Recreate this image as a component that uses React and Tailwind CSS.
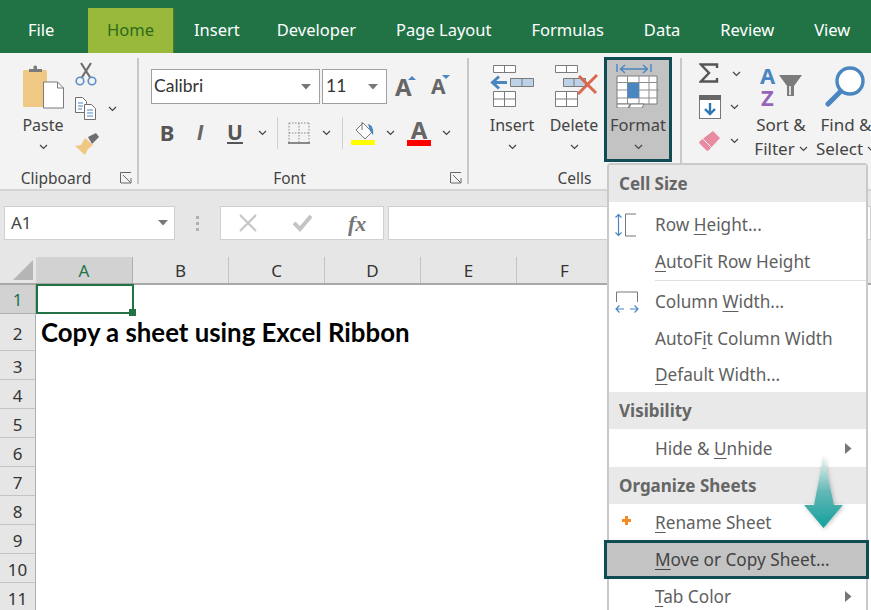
import React from "react";

const ui = "font-['Noto_Sans',sans-serif]";
const calibri = "font-['Lato',sans-serif]";

const tabs = ["Insert", "Developer", "Page Layout", "Formulas", "Data", "Review", "View"];
const columns = ["B", "C", "D", "E", "F", "G"];
const rowNumbers = [3, 4, 5, 6, 7, 8, 9, 10, 11];

const Chevron = ({ className = "" }) => (
  <svg width="9" height="6" viewBox="0 0 9 6" className={`shrink-0 ${className}`}>
    <path d="M1 1l3.5 3.5L8 1" fill="none" stroke="#444" strokeWidth="1.2" />
  </svg>
);

const Caret = () => (
  <svg width="10" height="6" viewBox="0 0 10 6">
    <path d="M0 0h10L5 5.5z" fill="#777" />
  </svg>
);

const Launcher = () => (
  <svg width="12" height="12" viewBox="0 0 12 12">
    <path d="M.5 11V.5H11M3 3l7.5 7.5M6 11h5V6M1 11h5" fill="none" stroke="#666" strokeWidth="1" />
  </svg>
);

const PasteIcon = () => (
  <svg width="42" height="46" viewBox="0 0 42 46">
    <rect x="1" y="7" width="24" height="37" rx="1.5" fill="#efc884" />
    <path d="M7 9V6h4.5V3.5a2 2 0 0 1 3.500 0V6H20v3z" fill="#7b7b7b" />
    <path d="M21.500 19h14l6 6v20h-20z" fill="#fff" stroke="#7b7b7b" strokeWidth="1" />
    <path d="M35.500 19v6h6" fill="none" stroke="#7b7b7b" />
  </svg>
);

const ScissorsIcon = () => (
  <svg width="22" height="24" viewBox="0 0 22 24">
    <path d="M6 1l9.500 15M16 1L6.500 16" fill="none" stroke="#6e6e6e" strokeWidth="2.200" />
    <circle cx="5" cy="19" r="3.800" fill="none" stroke="#5b8fc5" strokeWidth="1.600" />
    <circle cx="17" cy="19" r="3.800" fill="none" stroke="#5b8fc5" strokeWidth="1.600" />
  </svg>
);

const CopyIcon = () => (
  <svg width="21" height="23" viewBox="0 0 21 23">
    <path d="M.5.5h7l4 4v11H.5z" fill="#fff" stroke="#6e6e6e" />
    <path d="M9.500 7.500h7l4 4v11h-11z" fill="#fff" stroke="#6e6e6e" />
    <path d="M3 6h5M3 9h5M3 12h4M12 13h6M12 16h6M12 19h6" stroke="#4a86c0" />
  </svg>
);

const BrushIcon = () => (
  <svg width="24" height="22" viewBox="0 0 24 22">
    <path d="M13 4l8-4 3 4-7 7z" fill="#6e6e6e" />
    <path d="M10 5l8 7-5 4-3 6L0 13l6-1z" fill="#efc884" />
  </svg>
);

const BordersIcon = () => (
  <svg width="22" height="22" viewBox="0 0 22 22">
    <path d="M1 1h20M1 11h20M1 1v19M11 1v19M21 1v19" fill="none" stroke="#888" strokeDasharray="1.500 1.500" />
    <path d="M0 21h22" stroke="#666" strokeWidth="1.500" />
  </svg>
);

const FillIcon = () => (
  <svg width="24" height="24" viewBox="0 0 24 24">
    <path d="M12 2l9 9-7 7-9-9z" fill="#fff" stroke="#777" />
    <path d="M11 1v8" stroke="#777" />
    <path d="M17 3c4 1 6 5 5 11l-3-4z" fill="#4a86c0" />
    <rect y="19" width="24" height="5" fill="#ffff00" />
  </svg>
);

const InsertIcon = () => (
  <svg width="44" height="44" viewBox="0 0 44 44">
    <g fill="#fff" stroke="#7b7b7b" strokeWidth="1">
      <path d="M3.500 1.500h22v7h-22zM14.500 1.500v7" />
      <path d="M3.500 27.500h22v15h-22zM3.500 35h22M14.500 27.500v15" />
    </g>
    <path d="M20.500 14.500h23v8h-23z" fill="#bcd2e8" stroke="#7b7b7b" />
    <path d="M32 14.500v8" stroke="#7b7b7b" />
    <path d="M17 18.500H4M9 12.500l-6.500 6 6.500 6" fill="none" stroke="#4a86c0" strokeWidth="3" />
  </svg>
);

const DeleteIcon = () => (
  <svg width="44" height="44" viewBox="0 0 44 44" className="ml-[5px]">
    <g fill="#fff" stroke="#7b7b7b" strokeWidth="1">
      <path d="M.5 1.500h22v7H.5zM11.500 1.500v7" />
      <path d="M.5 27.500h22v15H.5zM.5 35h22M11.500 27.500v15" />
    </g>
    <path d="M8.500 14.500h22v8h-22z" fill="#bcd2e8" stroke="#7b7b7b" />
    <path d="M19 14.500v8" stroke="#7b7b7b" />
    <path d="M24 12l17 17M42 11L23 30" fill="none" stroke="#d9694a" strokeWidth="3" />
  </svg>
);

const FormatIcon = () => (
  <svg width="44" height="44" viewBox="0 0 44 44">
    <path d="M1 0v8M35 0v8M5 5h26M9 1L4.500 5 9 9M27 1l4.500 4L27 9" fill="none" stroke="#4a86c0" strokeWidth="1.400" />
    <path d="M1 12h40v28H1z" fill="#fff" stroke="#7b7b7b" />
    <path d="M1 18.500h40M1 34h40M11.500 12v28M23 12v28M33 12v28M1 26h10M23 26h20" stroke="#8d8d8d" />
    <rect x="11.500" y="19" width="11.500" height="15" fill="#4a86c0" />
    <path d="M1 40h13l-2 4H1zM15 40h13l-2 4H13z" fill="#fff" stroke="#7b7b7b" />
  </svg>
);

const SigmaIcon = () => (
  <svg width="20" height="20" viewBox="0 0 20 20">
    <path d="M18 5V1.500H2L10 10 2 18.500h16V15" fill="none" stroke="#555" strokeWidth="2.400" />
  </svg>
);

const FillDownIcon = () => (
  <svg width="22" height="24" viewBox="0 0 22 24">
    <rect x=".5" y=".5" width="21" height="23" fill="#fff" stroke="#777" />
    <rect width="22" height="5" fill="#666" />
    <path d="M11 8v11M6 14l5 5 5-5" fill="none" stroke="#2f75b5" strokeWidth="2.400" />
  </svg>
);

const EraserIcon = () => (
  <svg width="22" height="22" viewBox="0 0 22 22">
    <path d="M14 1l7 7-11 12a2 2 0 0 1-3 0l-6-6a2 2 0 0 1 0-3z" fill="#e98ba0" />
    <path d="M4 9l9 9" stroke="#f3f3f3" strokeWidth="1" />
  </svg>
);

const SortIcon = () => (
  <svg width="46" height="42" viewBox="0 0 46 42" className="ml-[3px]">
    <text x="0" y="19" fontSize="22" fontWeight="700" fill="#4a86c0" fontFamily="Noto Sans">A</text>
    <text x="1" y="41" fontSize="22" fontWeight="700" fill="#9566b8" fontFamily="Noto Sans">Z</text>
    <path d="M19 10h23l-8 11v10h-7V21z" fill="#7b7b7b" />
    <path d="M29 21h2v9h-2z" fill="#ddd" />
  </svg>
);

const SearchIcon = () => (
  <svg width="42" height="42" viewBox="0 0 42 42">
    <circle cx="25" cy="16" r="13" fill="#fff" stroke="#4a86c0" strokeWidth="3.400" />
    <path d="M15 27L3 39" stroke="#4a86c0" strokeWidth="5" strokeLinecap="round" />
  </svg>
);

const RowHeightIcon = () => (
  <svg width="24" height="24" viewBox="0 0 24 24">
    <path d="M3.500 1v22M.5 4.500L3.500 1.500l3 3M.5 19.500l3 3 3-3" fill="none" stroke="#4a86c0" strokeWidth="1.200" />
    <path d="M21 1H10.500v22H21" fill="none" stroke="#777" />
  </svg>
);

const ColumnWidthIcon = () => (
  <svg width="24" height="22" viewBox="0 0 24 22">
    <path d="M1.500 11V1h21v10" fill="none" stroke="#777" />
    <path d="M1 18h8M15 18h8M4.500 14.500L1 18l3.500 3.500M19.500 14.500L23 18l-3.500 3.500" fill="none" stroke="#4a86c0" strokeWidth="1.200" />
  </svg>
);

const OrangeDot = () => (
  <svg width="9" height="9" viewBox="0 0 9 9" className="ml-[7px] -mt-[4px]">
    <path d="M3 0h3v3h3v3H6v3H3V6H0V3h3z" fill="#f58a1f" />
  </svg>
);

const LargeButton = ({ icon, label, className = "", labelClass = "" }) => (
  <div className={`flex flex-col items-center pt-[5px] ${className}`}>
    <div className="h-[46px] flex items-center justify-center">{icon}</div>
    <div className={`mt-[4px] h-[24px] leading-[24px] text-[16px] text-[#444] ${labelClass}`}>{label}</div>
    <Chevron className="mt-[7px]" />
  </div>
);

const TwoLineButton = ({ icon, first, second, className = "" }) => (
  <div className={`flex flex-col items-center pt-[5px] ${className}`}>
    <div className="h-[46px] flex items-center justify-center">{icon}</div>
    <div className="mt-[4px] h-[24px] leading-[24px] text-[17px] text-[#444] whitespace-nowrap">{first}</div>
    <div className="h-[24px] leading-[24px] text-[17px] text-[#444] whitespace-nowrap flex items-center gap-[4px]">
      {second}
      <Chevron />
    </div>
  </div>
);

const Group = ({ label, launcher, className = "", labelClass = "", children }) => (
  <div className={`mt-[5px] h-[126px] flex flex-col shrink-0 border-r-2 border-[#c8c8c8] ${className}`}>
    <div className="flex-1 min-h-0">{children}</div>
    <div className="h-[14px] flex items-center -mb-[1px]">
      <div className={`flex-1 text-center text-[15.500px] leading-[14px] text-[#444] ${labelClass}`}>{label}</div>
      {launcher && <div className="mr-[5px]"><Launcher /></div>}
    </div>
  </div>
);

const Underlined = ({ children }) => (
  <span className="underline underline-offset-[3px] decoration-1">{children}</span>
);

const MenuHeading = ({ children, className = "" }) => (
  <div className={`h-[37px] flex items-center pl-[10px] bg-[#e9e9e9] text-[17px] font-bold text-[#666] ${className}`}>
    {children}
  </div>
);

const MenuItem = ({ icon, arrow, children, className = "" }) => (
  <div className={`h-[37px] flex items-center text-[17.200px] text-[#5f5f5f] ${className}`}>
    <div className="w-[46px] pl-[6px] flex items-center shrink-0">{icon}</div>
    <div className="flex-1 whitespace-nowrap">{children}</div>
    {arrow && (
      <svg width="7" height="11" viewBox="0 0 7 11" className="mr-[14px]">
        <path d="M0 0l6.500 5.500L0 11z" fill="#777" />
      </svg>
    )}
  </div>
);

const FormatMenu = () => (
  <div className={`absolute left-[607px] top-[163px] w-[261px] h-[460px] bg-white border-2 border-[#c9c9c9] rounded-t-[4px] ${ui}`}>
    <MenuHeading>Cell Size</MenuHeading>
    <MenuItem icon={<RowHeightIcon />} className="mt-[4px]">Row <Underlined>H</Underlined>eight...</MenuItem>
    <MenuItem><Underlined>A</Underlined>utoFit Row Height</MenuItem>
    <div className="h-[1px] ml-[46px] bg-[#e0e0e0]" />
    <MenuItem icon={<ColumnWidthIcon />} className="mt-[2px]">Column <Underlined>W</Underlined>idth...</MenuItem>
    <MenuItem>AutoF<Underlined>i</Underlined>t Column Width</MenuItem>
    <MenuItem className="!h-[35px]"><Underlined>D</Underlined>efault Width...</MenuItem>
    <MenuHeading>Visibility</MenuHeading>
    <MenuItem arrow className="mt-[1px]">Hide &amp; <Underlined>U</Underlined>nhide</MenuItem>
    <MenuHeading>Organize Sheets</MenuHeading>
    <MenuItem icon={<OrangeDot />}><Underlined>R</Underlined>ename Sheet</MenuItem>
    <div className="-ml-[5px] -mr-[3px] -mt-[1px] h-[39px] flex items-center bg-[#c3c3c3] border-[3px] border-[#0f4c54] text-[17.200px] text-[#444]">
      <div className="w-[48px] shrink-0" />
      <div className="whitespace-nowrap"><Underlined>M</Underlined>ove or Copy Sheet...</div>
    </div>
    <MenuItem arrow className="-mt-[1px]"><Underlined>T</Underlined>ab Color</MenuItem>
  </div>
);

const DownArrow = () => (
  <svg width="50" height="82" viewBox="0 0 50 82" className="absolute left-[799px] top-[452px]">
    <defs>
      <linearGradient id="arrowFill" x1="0" y1="0" x2="0" y2="1">
        <stop offset="0" stopColor="#eef6f6" />
        <stop offset="0.5" stopColor="#62b7b5" />
        <stop offset="1" stopColor="#12a09c" />
      </linearGradient>
      <filter id="arrowShadow" x="-30%" y="-10%" width="160%" height="130%">
        <feDropShadow dx="1" dy="1" stdDeviation="2" floodColor="#000" floodOpacity="0.25" />
      </filter>
    </defs>
    <path d="M24.500 4L35 53h9L24.500 76 5 53h10z" fill="url(#arrowFill)" filter="url(#arrowShadow)" />
  </svg>
);

export default function App() {
  return (
    <div className={`relative w-[871px] h-[610px] overflow-hidden bg-white ${ui}`}>
      {/* tabs */}
      <div className="h-[53px] flex items-end bg-[#217346] text-white text-[16.500px]">
        <div className="h-[45px] w-[88px] shrink-0 pl-[28px] leading-[44px]">File</div>
        <div className="h-[45px] w-[86px] shrink-0 text-center leading-[44px] bg-[#98b93a] text-[#2f6b1e] border-r border-[#4f7a28]">Home</div>
        {tabs.map((tab, i) => (
          <div key={tab} className={`h-[45px] shrink-0 pl-[20px] leading-[44px] whitespace-nowrap ${i === 0 ? "pr-[17px]" : "pr-[20px]"}`}>{tab}</div>
        ))}
      </div>

      {/* ribbon */}
      <div className="h-[138px] flex bg-[#f3f3f3] border-b-2 border-[#d4d4d4]">
        <Group label="Clipboard" launcher className="w-[139px]" labelClass="pr-[8px]">
          <div className="flex pl-[22px]">
            <LargeButton icon={<PasteIcon />} label="Paste" className="w-[42px]" />
            <div className="ml-[11px] -mt-[2px] flex flex-col">
              <div className="h-[35px] flex items-center"><ScissorsIcon /></div>
              <div className="h-[35px] flex items-center gap-[12px]"><CopyIcon /><Chevron /></div>
              <div className="h-[35px] flex items-center"><BrushIcon /></div>
            </div>
          </div>
        </Group>

        <Group label="Font" launcher className="w-[330px] pl-[12px]" labelClass="pr-[22px]">
          <div className="mt-[11px] h-[35px] flex gap-[2px]">
            <div className={`w-[169px] h-[35px] pl-[2px] pr-[8px] flex items-center justify-between bg-white border border-[#a0a0a0] text-[17.500px] text-[#333] ${calibri}`}>
              Calibri <Caret />
            </div>
            <div className={`w-[65px] h-[35px] pl-[3px] pr-[8px] flex items-center justify-between bg-white border border-[#a0a0a0] text-[17.500px] text-[#333] ${calibri}`}>
              11 <Caret />
            </div>
            <div className="ml-[6px] w-[34px] h-[35px] flex items-center relative text-[24px] font-bold text-[#666]">
              A
              <span className="absolute left-[13px] top-[7px] border-x-[4px] border-b-[4px] border-x-transparent border-b-[#4a86c0]" />
            </div>
            <div className="w-[30px] h-[35px] flex items-center relative text-[21px] font-bold text-[#666]">
              A
              <span className="absolute left-[11px] top-[6px] border-x-[4px] border-t-[4px] border-x-transparent border-t-[#4a86c0]" />
            </div>
          </div>
          <div className="mt-[11px] h-[35px] flex items-center text-[#555]">
            <div className="w-[32px] text-center text-[22px] font-bold">B</div>
            <div className="w-[34px] text-center text-[22px] italic font-bold text-[#666] font-['Liberation_Sans',sans-serif]">I</div>
            <div className="w-[36px] text-center text-[21px] font-bold underline underline-offset-2">U</div>
            <div className="w-[18px] flex justify-center"><Chevron /></div>
            <div className="ml-[6px] w-[1px] h-[32px] bg-[#d0d0d0]" />
            <div className="ml-[10px] flex"><BordersIcon /></div>
            <div className="w-[32px] flex justify-center"><Chevron /></div>
            <div className="w-[1px] h-[32px] bg-[#d0d0d0]" />
            <div className="ml-[8px] flex"><FillIcon /></div>
            <div className="w-[30px] flex justify-center"><Chevron /></div>
            <div className="w-[28px] flex flex-col items-center">
              <div className="h-[21px] text-[24px] leading-[21px] font-bold text-[#666]">A</div>
              <div className="w-[24px] h-[6px] bg-[#ff0000]" />
            </div>
            <div className="w-[26px] flex justify-center"><Chevron /></div>
          </div>
        </Group>

        <Group label="Cells" className="w-[213px] pl-[12px]" labelClass="pr-[12px]">
          <div className="flex">
            <LargeButton icon={<InsertIcon />} label="Insert" className="w-[62px]" />
            <LargeButton icon={<DeleteIcon />} label="Delete" className="w-[62px]" />
            <LargeButton
              icon={<FormatIcon />}
              label="Format"
              labelClass="!text-[16.500px]"
              className="-ml-[1px] -mt-[1px] w-[68px] h-[105px] !pt-[3px] bg-[#c3c3c3] border-[3px] border-[#0f4c54]"
            />
          </div>
        </Group>

        <div className="mt-[5px] flex-1 flex min-w-0">
          <div className="w-[70px] pl-[17px] -mt-[2px] shrink-0 flex flex-col">
            <div className="h-[34px] flex items-center gap-[13px]"><SigmaIcon /><Chevron className="mt-[2px]" /></div>
            <div className="h-[34px] flex items-center gap-[9px]"><FillDownIcon /><Chevron /></div>
            <div className="h-[34px] flex items-center gap-[9px]"><EraserIcon /><Chevron /></div>
          </div>
          <TwoLineButton icon={<SortIcon />} first="Sort &" second="Filter" className="w-[58px] shrink-0" />
          <TwoLineButton icon={<SearchIcon />} first="Find &" second="Select" className="w-[72px] shrink-0" />
        </div>
      </div>

      {/* formula bar */}
      <div className="h-[66px] pt-[15px] pl-[4px] flex items-start bg-[#e6e6e6]">
        <div className="w-[171px] h-[34px] px-[6px] flex items-center justify-between bg-white border border-[#d0d0d0] text-[17px] text-[#444]">
          A1 <Caret />
        </div>
        <div className="w-[45px] h-[34px] flex flex-col items-center justify-center gap-[3px]">
          <span className="w-[3px] h-[3px] bg-[#b0b0b0]" />
          <span className="w-[3px] h-[3px] bg-[#b0b0b0]" />
          <span className="w-[3px] h-[3px] bg-[#b0b0b0]" />
        </div>
        <div className="w-[164px] h-[34px] flex items-center bg-white border border-[#d0d0d0]">
          <svg width="18" height="18" viewBox="0 0 18 18" className="ml-[18px]">
            <path d="M1 1l16 16M17 1L1 17" stroke="#c4c4c4" strokeWidth="2" />
          </svg>
          <svg width="20" height="18" viewBox="0 0 20 18" className="ml-[36px]">
            <path d="M1 9l6 6L18 2" fill="none" stroke="#c4c4c4" strokeWidth="4" />
          </svg>
          <span className="ml-[35px] text-[22px] italic font-bold text-[#777] font-['Liberation_Serif',serif]">fx</span>
        </div>
        <div className="ml-[4px] flex-1 h-[34px] bg-white border border-[#d0d0d0]" />
      </div>

      {/* column headers */}
      <div className="h-[28px] flex bg-[#e6e6e6] border-b-2 border-[#a8a8a8] text-[17px] text-[#333]">
        <div className="w-[36px] shrink-0 flex items-end justify-end pr-[3px] pb-[3px]">
          <span className="border-l-[20px] border-b-[20px] border-l-transparent border-b-[#b5b5b5]" />
        </div>
        <div className="w-[97px] shrink-0 text-center leading-[28px] bg-[#d2d2d2] text-[#217346] border-r border-[#b0b0b0]">A</div>
        {columns.map((col) => (
          <div key={col} className="w-[96px] shrink-0 text-center leading-[28px] border-r border-[#c4c4c4]">{col}</div>
        ))}
      </div>

      {/* sheet */}
      <div className="flex text-[17px] text-[#333]">
        <div className="w-[36px] shrink-0 bg-[#e6e6e6] border-r border-[#b0b0b0]">
          <div className="h-[29px] text-center leading-[29px] bg-[#d2d2d2] text-[#217346] border-b border-[#b0b0b0]">1</div>
          <div className="h-[37px] text-center leading-[39px] border-b border-[#c4c4c4]">2</div>
          {rowNumbers.map((n) => (
            <div key={n} className="h-[29px] text-center leading-[31px] border-b border-[#c4c4c4]">{n}</div>
          ))}
        </div>
        <div className="flex-1">
          <div className="relative w-[98px] h-[30px] -mt-[1px] border-2 border-[#217346]">
            <span className="absolute -right-[4px] -bottom-[4px] w-[7px] h-[7px] bg-[#217346]" />
          </div>
          <div className={`h-[37px] pl-[5px] flex items-center text-[25.800px] font-bold text-black whitespace-nowrap ${calibri}`}>
            Copy a sheet using Excel Ribbon
          </div>
        </div>
      </div>

      <FormatMenu />
      <DownArrow />
    </div>
  );
}
